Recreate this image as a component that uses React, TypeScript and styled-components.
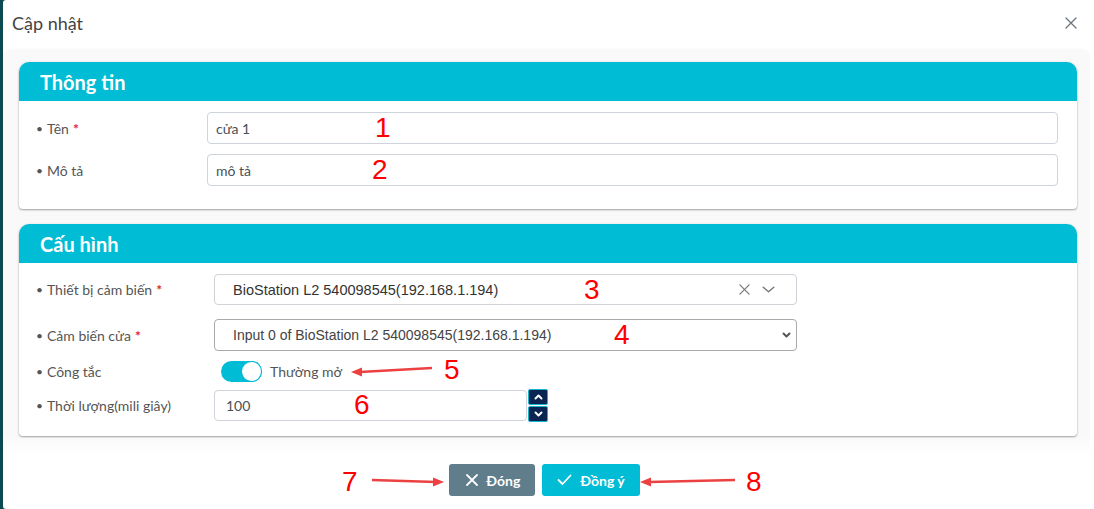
import React from 'react';
import styled, { createGlobalStyle } from 'styled-components';

const GlobalStyle = createGlobalStyle`
  html, body { margin: 0; padding: 0; }
  body {
    background: #0c4a52;
    width: 1094px;
    height: 509px;
    overflow: hidden;
    font-family: Lato, "Noto Sans", sans-serif;
  }
  * { box-sizing: border-box; }
`;

const Page = styled.div`
  position: relative;
  display: flex;
  height: 509px;
  padding-left: 3px;
`;

const Modal = styled.div`
  flex: 1;
  display: flex;
  flex-direction: column;
  background: #fff;
  border-radius: 3px 0 0 3px;
`;

const Header = styled.div`
  height: 50px;
  display: flex;
  align-items: center;
  justify-content: space-between;
  padding: 0 17px 0 9px;
`;

const Title = styled.h5`
  margin: 0;
  font-size: 18px;
  font-weight: 400;
  color: #444;
  padding-bottom: 4px;
`;

const CloseButton = styled.button`
  border: 0;
  background: transparent;
  padding: 0;
  display: flex;
  margin-bottom: 4px;
`;

const Body = styled.div`
  margin-right: 4px;
  padding: 12px 13px 20px 16px;
  border-radius: 8px 8px 0 0;
  background: linear-gradient(to bottom, #f9f9f9 calc(100% - 22px), #ffffff);
  box-shadow: 0 -1px 2px rgba(0, 0, 0, 0.03);
  display: flex;
  flex-direction: column;
  gap: 15px;
`;

const Card = styled.section`
  background: #fff;
  border-radius: 10px 10px 4px 4px;
  box-shadow: 0 1px 2px rgba(0, 0, 0, 0.35), 0 0 3px rgba(0, 0, 0, 0.06);
`;

const CardHeader = styled.div`
  height: 39px;
  display: flex;
  align-items: center;
  padding-left: 21px;
  background: #00bcd4;
  border-radius: 10px 10px 0 0;
  color: #fff;
  font-size: 20px;
  font-weight: 700;
`;

const CardBody = styled.div<{ $pad: string }>`
  padding: ${(p) => p.$pad};
  display: flex;
  flex-direction: column;
`;

const Row = styled.div<{ $label: number; $top?: number }>`
  display: grid;
  grid-template-columns: ${(p) => p.$label}px auto;
  align-items: center;
  margin-top: ${(p) => p.$top ?? 0}px;
`;

const Label = styled.label`
  font-size: 14px;
  color: #555;
  display: flex;
  align-items: center;
  &::before {
    content: '•';
    font-size: 12px;
    margin-right: 4px;
    color: #555;
  }
`;

const Required = styled.span`
  color: #e3242b;
  font-weight: 700;
  margin-left: 4px;
`;

const TextInput = styled.input<{ $w?: number }>`
  height: 32px;
  width: ${(p) => (p.$w ? `${p.$w}px` : '100%')};
  border: 1px solid #ced4da;
  border-radius: 4px;
  padding: 0 8px;
  font-family: inherit;
  font-size: 14px;
  color: #495057;
  outline: none;
  background: #fff;
`;

const SelectBox = styled.div<{ $h: number; $border: string; $pad: number; $fs: number }>`
  width: 583px;
  height: ${(p) => p.$h}px;
  border: 1px solid ${(p) => p.$border};
  border-radius: 4px;
  display: flex;
  align-items: center;
  padding: 0 ${(p) => p.$pad}px 0 18px;
  font-family: "Liberation Sans", Arial, sans-serif;
  font-size: ${(p) => p.$fs}px;
  color: #333;
`;

const SelectText = styled.span<{ $color?: string }>`
  flex: 1;
  white-space: nowrap;
  color: ${(p) => p.$color ?? '#333'};
`;

const SelectIcons = styled.span`
  display: flex;
  align-items: center;
  gap: 12px;
`;

const SwitchWrap = styled.div`
  display: flex;
  align-items: center;
  gap: 8px;
  padding-left: 7px;
  font-size: 14px;
  color: #555;
`;

const Track = styled.span<{ $on: boolean }>`
  width: 41px;
  height: 21px;
  border-radius: 11px;
  background: ${(p) => (p.$on ? '#00bcd4' : '#ccc')};
  display: flex;
  align-items: center;
  justify-content: ${(p) => (p.$on ? 'flex-end' : 'flex-start')};
  padding: 1px;
`;

const Knob = styled.span`
  width: 19px;
  height: 19px;
  border-radius: 50%;
  background: #fff;
  box-shadow: 0 0 0 1px #00bcd4;
`;

const NumberGroup = styled.div`
  display: flex;
  align-items: center;
`;

const NumberInput = styled(TextInput)`
  height: 31px;
  padding-left: 11px;
`;

const Spinner = styled.div`
  display: flex;
  flex-direction: column;
  gap: 1px;
  margin-left: 1px;
`;

const SpinButton = styled.span`
  width: 20px;
  height: 16px;
  background: #0b2552;
  border: 1px solid #17b5cc;
  border-radius: 2px;
  display: flex;
  align-items: center;
  justify-content: center;
`;

const Footer = styled.div`
  display: flex;
  justify-content: center;
  gap: 7px;
  padding: 8px 8px 0 0;
`;

const Button = styled.button<{ $bg: string; $padL: number }>`
  height: 32px;
  display: flex;
  align-items: center;
  gap: 8px;
  padding: 0 15px 0 ${(p) => p.$padL}px;
  border: 0;
  border-radius: 3px;
  background: ${(p) => p.$bg};
  color: #fff;
  font-family: inherit;
  font-size: 14px;
  font-weight: 700;
`;

const Overlay = styled.div`
  position: absolute;
  inset: 0;
  pointer-events: none;
`;

const Mark = styled.span<{ $x: number; $y: number }>`
  position: absolute;
  left: ${(p) => p.$x}px;
  top: ${(p) => p.$y}px;
  font-family: "Liberation Sans", Arial, sans-serif;
  font-size: 28px;
  line-height: 28px;
  color: #ff0000;
`;

const ArrowLayer = styled.svg`
  position: absolute;
  left: 0;
  top: 0;
`;

const XIcon = ({ size, color, width }: { size: number; color: string; width: number }) => (
  <svg width={size} height={size} viewBox="0 0 12 12">
    <path d="M1 1 L11 11 M11 1 L1 11" stroke={color} strokeWidth={width} fill="none" strokeLinecap="round" />
  </svg>
);

const ChevronDown = ({ w, h, color, sw }: { w: number; h: number; color: string; sw: number }) => (
  <svg width={w} height={h} viewBox={`0 0 ${w} ${h}`}>
    <polyline
      points={`${sw / 2 + 0.5},${sw / 2 + 0.5} ${w / 2},${h - sw / 2 - 0.5} ${w - sw / 2 - 0.5},${sw / 2 + 0.5}`}
      stroke={color}
      strokeWidth={sw}
      fill="none"
      strokeLinecap="round"
      strokeLinejoin="round"
    />
  </svg>
);

const ChevronUp = ({ w, h, color, sw }: { w: number; h: number; color: string; sw: number }) => (
  <svg width={w} height={h} viewBox={`0 0 ${w} ${h}`}>
    <polyline
      points={`${sw / 2 + 0.5},${h - sw / 2 - 0.5} ${w / 2},${sw / 2 + 0.5} ${w - sw / 2 - 0.5},${h - sw / 2 - 0.5}`}
      stroke={color}
      strokeWidth={sw}
      fill="none"
      strokeLinecap="round"
      strokeLinejoin="round"
    />
  </svg>
);

const CheckIcon = () => (
  <svg width="15" height="12" viewBox="0 0 15 12">
    <polyline points="1.5,6 5.5,10 13.5,1.5" stroke="#fff" strokeWidth="1.8" fill="none" strokeLinecap="round" strokeLinejoin="round" />
  </svg>
);

const marks = [
  { n: '1', x: 375, y: 114 },
  { n: '2', x: 372, y: 156 },
  { n: '3', x: 584, y: 276 },
  { n: '4', x: 614, y: 321 },
  { n: '5', x: 444, y: 356 },
  { n: '6', x: 354, y: 391 },
  { n: '7', x: 342, y: 468 },
  { n: '8', x: 746, y: 468 },
];

const ARROW = '#ec4141';

export default function App() {
  return (
    <>
      <GlobalStyle />
      <Page>
        <Modal>
          <Header>
            <Title>Cập nhật</Title>
            <CloseButton aria-label="close">
              <XIcon size={12} color="#6c757d" width={1.3} />
            </CloseButton>
          </Header>
          <Body>
            <Card>
              <CardHeader>Thông tin</CardHeader>
              <CardBody $pad="11px 19px 23px 17px">
                <Row $label={171}>
                  <Label>
                    Tên<Required>*</Required>
                  </Label>
                  <TextInput readOnly value="cửa 1" />
                </Row>
                <Row $label={171} $top={10}>
                  <Label>Mô tả</Label>
                  <TextInput readOnly value="mô tả" />
                </Row>
              </CardBody>
            </Card>
            <Card>
              <CardHeader>Cấu hình</CardHeader>
              <CardBody $pad="11px 0 14px 17px">
                <Row $label={178}>
                  <Label>
                    Thiết bị cảm biến<Required>*</Required>
                  </Label>
                  <SelectBox $h={31} $border="#cfd3d8" $pad={21} $fs={14.5}>
                    <SelectText>BioStation L2 540098545(192.168.1.194)</SelectText>
                    <SelectIcons>
                      <XIcon size={11} color="#7a7a7a" width={1.4} />
                      <ChevronDown w={13} h={7} color="#7a7a7a" sw={1.5} />
                    </SelectIcons>
                  </SelectBox>
                </Row>
                <Row $label={178} $top={14}>
                  <Label>
                    Cảm biến cửa<Required>*</Required>
                  </Label>
                  <SelectBox $h={32} $border="#a9a9a9" $pad={5} $fs={14}>
                    <SelectText $color="#444">Input 0 of BioStation L2 540098545(192.168.1.194)</SelectText>
                    <ChevronDown w={9} h={6} color="#555" sw={2} />
                  </SelectBox>
                </Row>
                <Row $label={178} $top={10}>
                  <Label>Công tắc</Label>
                  <SwitchWrap>
                    <Track $on>
                      <Knob />
                    </Track>
                    Thường mở
                  </SwitchWrap>
                </Row>
                <Row $label={178} $top={7}>
                  <Label>Thời lượng(mili giây)</Label>
                  <NumberGroup>
                    <NumberInput readOnly value="100" $w={313} />
                    <Spinner>
                      <SpinButton>
                        <ChevronUp w={9} h={6} color="#fff" sw={2} />
                      </SpinButton>
                      <SpinButton>
                        <ChevronDown w={9} h={6} color="#fff" sw={2} />
                      </SpinButton>
                    </Spinner>
                  </NumberGroup>
                </Row>
              </CardBody>
            </Card>
          </Body>
          <Footer>
            <Button $bg="#607d8b" $padL={17}>
              <XIcon size={12} color="#fff" width={1.8} />
              Đóng
            </Button>
            <Button $bg="#00bcd4" $padL={15}>
              <CheckIcon />
              Đồng ý
            </Button>
          </Footer>
        </Modal>
        <Overlay>
          <ArrowLayer width="1094" height="509">
            <line x1="432" y1="368" x2="360" y2="372" stroke={ARROW} strokeWidth="2.5" />
            <polygon points="351,372 362,367.5 362,376.5" fill={ARROW} />
            <line x1="372" y1="480" x2="436" y2="482" stroke={ARROW} strokeWidth="2.5" />
            <polygon points="444,482 433,477.5 433,486.5" fill={ARROW} />
            <line x1="735" y1="480" x2="649" y2="482" stroke={ARROW} strokeWidth="2.5" />
            <polygon points="640,482 651,477.5 651,486.5" fill={ARROW} />
          </ArrowLayer>
          {marks.map((m) => (
            <Mark key={m.n} $x={m.x} $y={m.y}>
              {m.n}
            </Mark>
          ))}
        </Overlay>
      </Page>
    </>
  );
}
